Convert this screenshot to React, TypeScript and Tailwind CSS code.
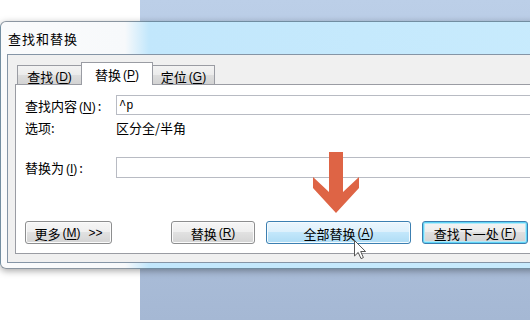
import React from "react";

function Mn({ k }: { k: string }) {
  return (
    <span className="ml-[2px] text-[12px] font-['Liberation_Sans',sans-serif]">
      (<span className="underline underline-offset-[2px]">{k}</span>)
    </span>
  );
}

export default function App() {
  return (
    <div className="relative w-[530px] h-[320px] overflow-hidden bg-white text-black font-['Noto_Sans_CJK_SC',sans-serif]">
      {/* desktop blue behind the dialog */}
      <div className="absolute left-[140px] top-0 right-0 bottom-0 bg-[linear-gradient(180deg,#bccfe8,#a5b8d4)]" />

      {/* dialog window */}
      <div className="absolute left-0 top-[21px] w-[570px] h-[248px] rounded-[6px] border border-[rgba(30,50,70,0.5)] bg-[linear-gradient(90deg,#fafbfc_0px,#f7f9fb_124px,#c2e7fc_148px,#c8ebfd_570px)] shadow-[0_2px_7px_rgba(0,0,0,0.35)] flex flex-col px-[6px] pb-[5px]">
        <div className="h-[32px] flex items-center pl-[1px] text-[13px] tracking-[1px] leading-none">
          查找和替换
        </div>

        <div className="flex-1 border border-[#8595a6] bg-[#f0f0f0] flex flex-col px-[7px] pt-[7px] pb-[8px]">
          {/* tabs */}
          <div className="relative z-10 flex items-end pl-[2px] text-[13px] leading-none">
            <div className="w-[65px] h-[19px] pt-[3px] flex items-center justify-center border border-b-0 border-[#9a9ca3] bg-[linear-gradient(180deg,#f3f3f3,#ebebeb_50%,#dedede_50%,#d3d3d3)]">
              查找<Mn k="D" />
            </div>
            <div className="-ml-px w-[72px] h-[23px] -mb-px pt-[1px] flex items-center justify-center border border-b-0 border-[#9a9ca3] bg-white">
              替换<Mn k="P" />
            </div>
            <div className="-ml-px w-[63px] h-[19px] pt-[3px] flex items-center justify-center border border-b-0 border-[#9a9ca3] bg-[linear-gradient(180deg,#f3f3f3,#ebebeb_50%,#dedede_50%,#d3d3d3)]">
              定位<Mn k="G" />
            </div>
          </div>

          {/* panel */}
          <div className="flex-1 border border-[#9a9ca3] bg-white flex flex-col pl-[9px] text-[13px] leading-none">
            <div className="mt-[10px] h-[20px] flex items-center">
              <div className="w-[91px] shrink-0 pt-[2px]">
                查找内容<Mn k="N" />
                <span className="ml-[2px]">:</span>
              </div>
              <div className="flex-1 mr-[13px] h-full border border-[#b8bbc3] flex items-center pl-[2px] pt-[1px] font-['Liberation_Mono',monospace] text-[12px]">
                ^p
              </div>
            </div>

            <div className="h-[22px] flex items-center">
              <div className="w-[91px] shrink-0 pt-[2px]">选项:</div>
              <div className="pt-[2px]">区分全/半角</div>
            </div>

            <div className="mt-[20px] h-[21px] flex items-center">
              <div className="w-[91px] shrink-0 pt-[1px]">
                替换为<Mn k="I" />
                <span className="ml-[2px]">:</span>
              </div>
              <div className="flex-1 mr-[13px] h-full border border-[#b8bbc3]" />
            </div>

            <div className="mt-[43px] h-[23px] flex">
              <div className="w-[87px] h-full rounded-[3px] border border-[#8d8e8f] bg-[linear-gradient(180deg,#f6f6f6,#eeeeee_50%,#e1e1e1_50%,#d4d4d4)] shadow-[inset_0_0_0_1px_#fbfbfb] flex items-center justify-center pt-[1px]">
                更多<Mn k="M" />
                <span className="ml-[8px] text-[12px] font-['Liberation_Sans',sans-serif]">&gt;&gt;</span>
              </div>
              <div className="ml-[59px] w-[84px] h-full rounded-[3px] border border-[#8d8e8f] bg-[linear-gradient(180deg,#f6f6f6,#eeeeee_50%,#e1e1e1_50%,#d4d4d4)] shadow-[inset_0_0_0_1px_#fbfbfb] flex items-center justify-center pt-[1px]">
                替换<Mn k="R" />
              </div>
              <div className="ml-[11px] w-[145px] h-full rounded-[3px] border border-[#3c7fb1] bg-[linear-gradient(180deg,#ebf6fd,#dcf0fc_50%,#c3e7fb_50%,#aedcf5)] shadow-[inset_0_0_0_1px_#f4fbfe] flex items-center justify-center pt-[1px]">
                全部替换<Mn k="A" />
              </div>
              <div className="ml-[11px] w-[106px] h-full rounded-[3px] border border-[#3c7fb1] bg-[linear-gradient(180deg,#f4f4f4,#ececec_50%,#dfdfdf_50%,#d2d2d2)] shadow-[inset_0_0_0_1px_#5fd4f6,inset_0_0_0_2px_#b4e8f8] flex items-center justify-center pt-[1px]">
                查找下一处<Mn k="F" />
              </div>
            </div>
          </div>
        </div>
      </div>

      {/* red arrow annotation */}
      <svg className="absolute left-[313px] top-[152px]" width="46" height="62" viewBox="0 0 46 62">
        <polygon points="16,0 30,0 30,40 46,25 46,36 23,61 0,36 0,25 16,40" fill="#de6445" />
      </svg>

      {/* mouse cursor */}
      <svg className="absolute left-[353px] top-[239px]" width="14" height="21" viewBox="0 0 14 21">
        <path d="M1.5 1.5 L1.5 17 L5.2 13.4 L8 19.6 L10.4 18.6 L7.7 12.5 L12.6 12.5 Z" fill="#ffffff" stroke="#555555" strokeWidth="1" strokeLinejoin="round" />
      </svg>
    </div>
  );
}
